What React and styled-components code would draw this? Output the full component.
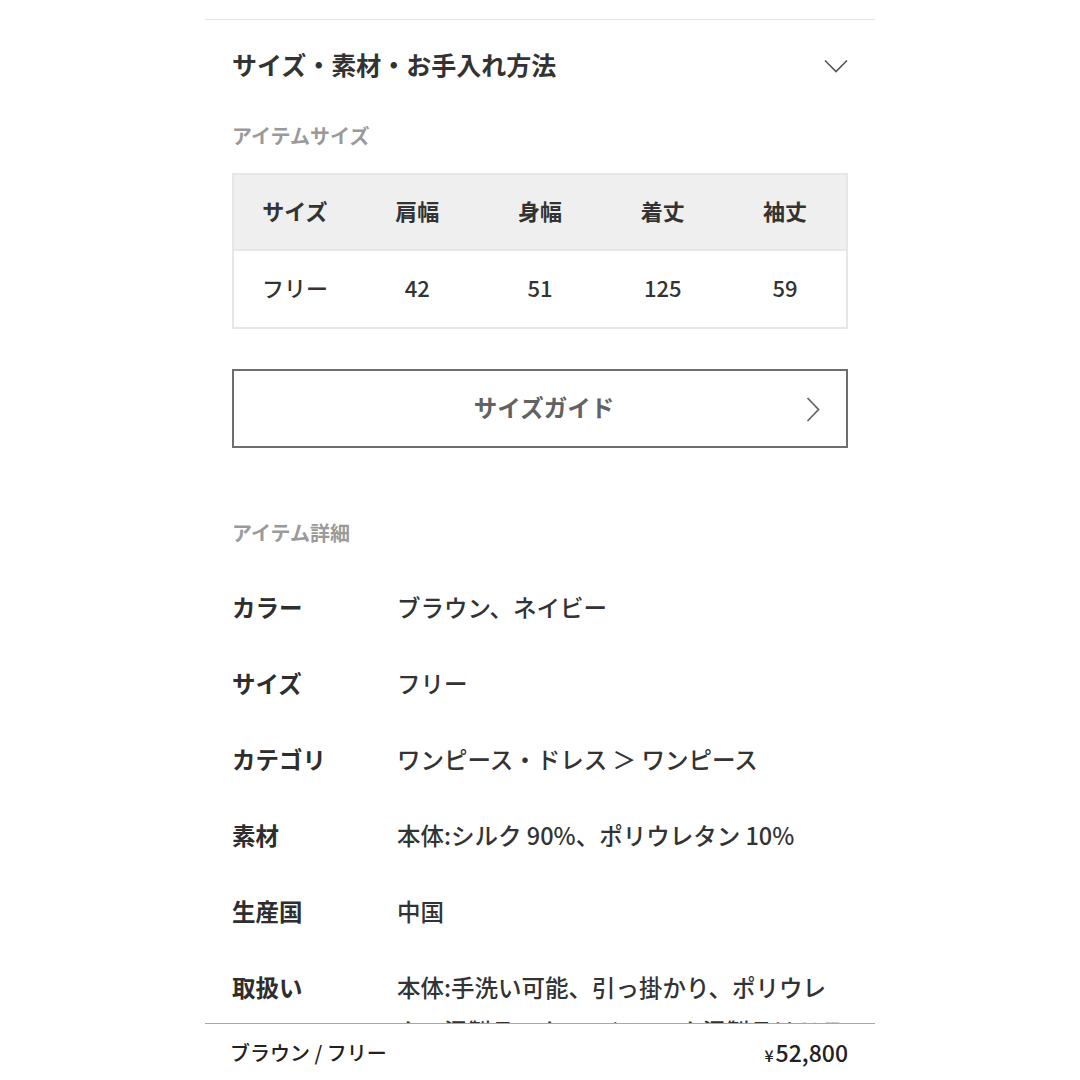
import React from "react";
import styled, { createGlobalStyle } from "styled-components";

const GlobalStyle = createGlobalStyle`
  html, body {
    margin: 0;
    padding: 0;
    background: #ffffff;
    font-family: "Noto Sans CJK JP", "Noto Sans", sans-serif;
    color: #333333;
  }
`;

const Page = styled.div`
  width: 670px;
  margin: 0 auto;
  padding-top: 19px;
  padding-bottom: 120px;
`;

const Accordion = styled.section`
  border-top: 1px solid #e2e2e2;
`;

const AccordionHeader = styled.div`
  display: flex;
  align-items: center;
  justify-content: space-between;
  height: 92px;
  padding: 0 27px;
`;

const AccordionTitle = styled.h2`
  margin: 0 0 4px;
  font-size: 25px;
  font-weight: 700;
  color: #333333;
`;

const Body = styled.div`
  padding: 0 27px;
`;

const SubTitle = styled.h3`
  margin: ${(p) => p.$top}px 0 0;
  font-size: 20px;
  line-height: 28px;
  font-weight: 700;
  color: #9a9a9a;
`;

const SizeTable = styled.table`
  width: 100%;
  margin-top: 23px;
  border-collapse: collapse;
  table-layout: fixed;
  border: 2px solid #e6e6e6;
`;

const HeadCell = styled.th`
  height: 76px;
  padding: 0 0 5px;
  box-sizing: border-box;
  background: #efefef;
  font-size: 22px;
  font-weight: 700;
  color: #333333;
  text-align: center;
`;

const Cell = styled.td`
  height: 78px;
  padding: 0 0 5px;
  box-sizing: border-box;
  border-top: 2px solid #e6e6e6;
  font-size: 22px;
  font-weight: 500;
  color: #333333;
  text-align: center;
`;

const GuideButton = styled.button`
  position: relative;
  display: flex;
  align-items: center;
  justify-content: center;
  width: 100%;
  height: 79px;
  margin-top: 40px;
  padding: 0 0 4px 8px;
  background: #ffffff;
  border: 2px solid #6e6e6e;
  font-family: inherit;
  font-size: 23.5px;
  font-weight: 700;
  color: #626262;
  cursor: pointer;

  svg {
    position: absolute;
    right: 26px;
    top: 26px;
  }
`;

const DetailList = styled.dl`
  margin: 22px 0 0;
`;

const DetailRow = styled.div`
  display: flex;
  padding: 15.5px 0 16.5px;
  line-height: 44px;
  font-size: 23.5px;
`;

const Label = styled.dt`
  flex: 0 0 165px;
  font-weight: 700;
  color: #2e2e2e;
`;

const Value = styled.dd`
  margin: 0;
  flex: 0 0 452px;
  font-weight: 500;
  color: #333333;
`;

const BottomBar = styled.div`
  position: fixed;
  left: 50%;
  bottom: 0;
  transform: translateX(-50%);
  width: 670px;
  height: 57px;
  box-sizing: border-box;
  padding: 0 27px 0 25px;
  display: flex;
  align-items: center;
  justify-content: space-between;
  background: #ffffff;
  border-top: 1px solid #a8a8a8;
`;

const Variant = styled.span`
  font-size: 20px;
  font-weight: 500;
  color: #222222;
`;

const Price = styled.span`
  font-size: 23px;
  font-weight: 500;
  color: #222222;
`;

const Yen = styled.span`
  font-size: 16px;
  margin-right: 2px;
`;

const sizeHead = ["サイズ", "肩幅", "身幅", "着丈", "袖丈"];
const sizeRow = ["フリー", "42", "51", "125", "59"];

const details = [
  ["カラー", "ブラウン、ネイビー"],
  ["サイズ", "フリー"],
  ["カテゴリ", "ワンピース・ドレス ＞ ワンピース"],
  ["素材", "本体:シルク 90%、ポリウレタン 10%"],
  ["生産国", "中国"],
  [
    "取扱い",
    "本体:手洗い可能、引っ掛かり、ポリウレタン混製品、ウールとシルク混製品はドライクリーニング",
  ],
];

const ChevronDown = () => (
  <svg width="24" height="14" viewBox="0 0 24 14" fill="none">
    <path d="M1 1.5 L12 12.5 L23 1.5" stroke="#555" strokeWidth="1.6" />
  </svg>
);

const ChevronRight = () => (
  <svg width="14" height="25" viewBox="0 0 14 25" fill="none">
    <path d="M1.5 1 L12.5 12.5 L1.5 24" stroke="#666" strokeWidth="1.8" />
  </svg>
);

export default function App() {
  return (
    <>
      <GlobalStyle />
      <Page>
        <Accordion>
          <AccordionHeader>
            <AccordionTitle>サイズ・素材・お手入れ方法</AccordionTitle>
            <ChevronDown />
          </AccordionHeader>
          <Body>
            <SubTitle $top={10}>アイテムサイズ</SubTitle>
            <SizeTable>
              <thead>
                <tr>
                  {sizeHead.map((h) => (
                    <HeadCell key={h}>{h}</HeadCell>
                  ))}
                </tr>
              </thead>
              <tbody>
                <tr>
                  {sizeRow.map((v, i) => (
                    <Cell key={i}>{v}</Cell>
                  ))}
                </tr>
              </tbody>
            </SizeTable>
            <GuideButton>
              サイズガイド
              <ChevronRight />
            </GuideButton>
            <SubTitle $top={71}>アイテム詳細</SubTitle>
            <DetailList>
              {details.map(([label, value]) => (
                <DetailRow key={label}>
                  <Label>{label}</Label>
                  <Value>{value}</Value>
                </DetailRow>
              ))}
            </DetailList>
          </Body>
        </Accordion>
      </Page>
      <BottomBar>
        <Variant>ブラウン / フリー</Variant>
        <Price>
          <Yen>¥</Yen>52,800
        </Price>
      </BottomBar>
    </>
  );
}
